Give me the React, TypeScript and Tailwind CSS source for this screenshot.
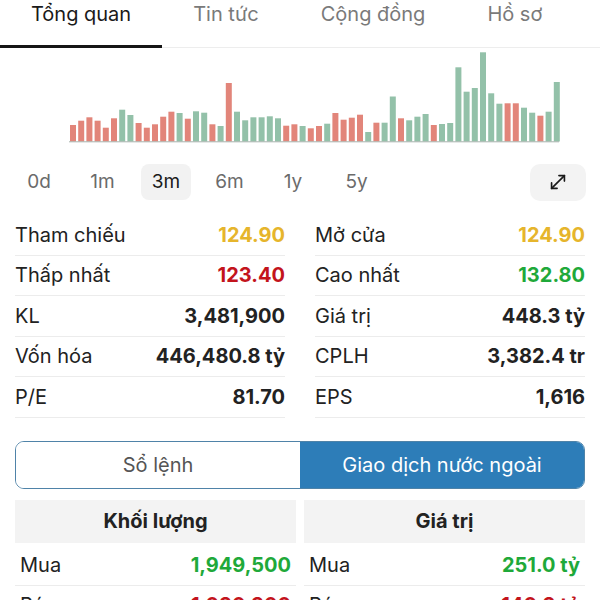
import { MoveDiagonal } from 'lucide-react'

const RED = '#e2857a'
const GREEN = '#93c1a9'

// [top y in page px, up?]
const bars: [number, boolean][] = [
  [125, false], [120.7, false], [117.3, false], [120.7, false], [127.7, false],
  [118.3, false], [109.7, true], [115, true], [123, false], [127.7, false],
  [124.3, false], [116.7, false], [111.7, false], [113, true], [118.7, false],
  [111.3, true], [112.7, true], [124.3, false], [126, true], [83, false],
  [111.7, true], [120.3, true], [117.3, true], [117.3, true], [116.3, true],
  [118.3, true], [125.7, false], [124.3, false], [126, true], [128.3, false],
  [126, false], [123.7, true], [113, false], [119.7, false], [117.7, false],
  [114.7, false], [132, true], [122.7, false], [122.7, true], [96.5, true],
  [118.3, false], [120.3, true], [116.7, true], [114, true], [125, false],
  [124, true], [123, true], [67.3, true], [91.7, true], [88, true],
  [52.3, true], [93.3, true], [103.7, true], [103.3, false], [103.3, false],
  [107.7, true], [112.7, true], [115.7, false], [111.7, true], [82, true],
]

const tabs = ['Tổng quan', 'Tin tức', 'Cộng đồng', 'Hồ sơ']
const ranges = ['0d', '1m', '3m', '6m', '1y', '5y']

interface Stat {
  label: string
  value: string
  color?: string
}

const left: Stat[] = [
  { label: 'Tham chiếu', value: '124.90', color: 'text-[#e6b52c]' },
  { label: 'Thấp nhất', value: '123.40', color: 'text-[#c3141c]' },
  { label: 'KL', value: '3,481,900' },
  { label: 'Vốn hóa', value: '446,480.8 tỷ' },
  { label: 'P/E', value: '81.70' },
]

const right: Stat[] = [
  { label: 'Mở cửa', value: '124.90', color: 'text-[#e6b52c]' },
  { label: 'Cao nhất', value: '132.80', color: 'text-[#1fa93a]' },
  { label: 'Giá trị', value: '448.3 tỷ' },
  { label: 'CPLH', value: '3,382.4 tr' },
  { label: 'EPS', value: '1,616' },
]

const StatRow = ({ label, value, color }: Stat) => (
  <div className="flex h-[40.5px] items-center justify-between border-b border-[#ececec]">
    <span className="text-[20px] text-[#222]">{label}</span>
    <span className={`text-[20px] font-bold ${color ?? 'text-[#222]'}`}>{value}</span>
  </div>
)

const VolumeChart = () => (
  <svg width="600" height="102" className="block">
    {bars.map(([top, up], i) => (
      <rect
        key={i}
        x={70 + i * 8.2}
        y={top - 48}
        width={6}
        height={141.5 - top}
        fill={up ? GREEN : RED}
      />
    ))}
    <line x1="69" y1="93.8" x2="559" y2="93.8" stroke="#a7b3ad" strokeWidth="1" />
  </svg>
)

export default function App() {
  return (
    <div className="h-[600px] w-[600px] overflow-hidden bg-white font-['Inter',sans-serif] text-[#222]">
      <div className="flex h-[48px] border-b border-[#ededed]">
        {tabs.map((t, i) => (
          <div
            key={t}
            className={`-mb-px flex h-[48px] items-start px-[31px] pt-[2px] text-[20px] leading-[24px] ${
              i === 0 ? 'border-b-[3px] border-[#151515] text-[#1a1a1a]' : 'text-[#7a7a7a]'
            }`}
          >
            {t}
          </div>
        ))}
      </div>

      <VolumeChart />

      <div className="mt-[14px] flex h-[36px] items-center justify-between pl-[14px] pr-[14px]">
        <div className="flex gap-[13.5px]">
          {ranges.map((r) => (
            <div
              key={r}
              className={`flex h-[36px] w-[50px] items-center justify-center rounded-lg text-[19px] ${
                r === '3m' ? 'bg-[#f2f2f2] text-[#1a1a1a]' : 'text-[#6b6b6b]'
              }`}
            >
              {r}
            </div>
          ))}
        </div>
        <div className="flex h-[37px] w-[56px] items-center justify-center rounded-[10px] bg-[#f3f3f3]">
          <MoveDiagonal size={22} strokeWidth={1.8} className="text-[#1a1a1a]" />
        </div>
      </div>

      <div className="mt-[15px] grid grid-cols-2 gap-x-[30px] px-[15px]">
        <div>
          {left.map((s) => (
            <StatRow key={s.label} {...s} />
          ))}
        </div>
        <div>
          {right.map((s) => (
            <StatRow key={s.label} {...s} />
          ))}
        </div>
      </div>

      <div className="mx-[15px] mt-[23px] flex h-[48px] overflow-hidden rounded-[9px] border-[1.5px] border-[#4f83a8]">
        <div className="flex flex-1 items-center justify-center bg-white text-[20px] text-[#555]">Sổ lệnh</div>
        <div className="flex flex-1 items-center justify-center bg-[#2d7db8] text-[20px] text-white">
          Giao dịch nước ngoài
        </div>
      </div>

      <div className="mt-[11px] grid grid-cols-2 gap-x-[8px] px-[15px]">
        {[
          { title: 'Khối lượng', buy: '1,949,500', sell: '1,030,300' },
          { title: 'Giá trị', buy: '251.0 tỷ', sell: '140.3 tỷ' },
        ].map((c) => (
          <div key={c.title}>
            <div className="flex h-[43px] items-center justify-center bg-[#f3f3f3] text-[20px] font-bold">
              {c.title}
            </div>
            <div className="flex h-[43px] items-center justify-between border-b border-[#ececec] px-[5px] pt-[3px]">
              <span className="text-[20px]">Mua</span>
              <span className="text-[20px] font-bold text-[#1fa93a]">{c.buy}</span>
            </div>
            <div className="flex h-[40px] items-center justify-between border-b border-[#ececec] px-[5px] pb-[1px]">
              <span className="text-[20px]">Bán</span>
              <span className="text-[20px] font-bold text-[#c3141c]">{c.sell}</span>
            </div>
          </div>
        ))}
      </div>
    </div>
  )
}
